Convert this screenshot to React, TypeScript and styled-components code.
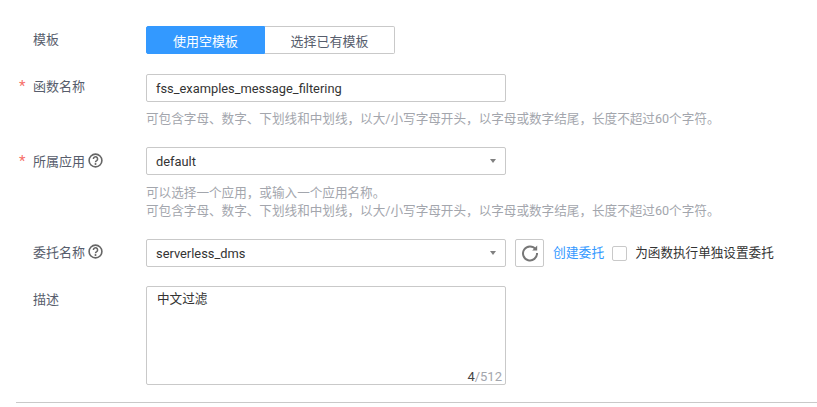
import React from 'react';
import styled, { createGlobalStyle } from 'styled-components';

const GlobalStyle = createGlobalStyle`
  html, body {
    margin: 0;
    background: #fff;
  }
  body {
    font-family: Roboto, "Noto Sans CJK SC", sans-serif;
    font-size: 13px;
    color: #252b3a;
  }
`;

const Page = styled.div`
  width: 817px;
  height: 407px;
  overflow: hidden;
  box-sizing: border-box;
  padding: 26px 0 0 16px;
`;

const Row = styled.div<{ $gap: number }>`
  display: grid;
  grid-template-columns: 130px 1fr;
  margin-bottom: ${({ $gap }) => $gap}px;
`;

const Label = styled.div<{ $height: number }>`
  display: flex;
  align-items: center;
  height: ${({ $height }) => $height}px;
  color: #575d6c;
  font-size: 13px;
`;

const Star = styled.span`
  width: 17px;
  flex: none;
  padding-left: 3px;
  box-sizing: border-box;
  color: #f66f6a;
  font-size: 15px;
  line-height: 26px;
  padding-top: 2px;
`;

const HelpIcon = styled.svg`
  margin-left: 3px;
  width: 15px;
  height: 15px;
  color: #666;
`;

const Segments = styled.div`
  display: flex;
  width: 249px;
  height: 28px;
`;

const Segment = styled.div<{ $active?: boolean }>`
  display: flex;
  align-items: center;
  justify-content: center;
  box-sizing: border-box;
  width: ${({ $active }) => ($active ? 119 : 130)}px;
  border: 1px solid ${({ $active }) => ($active ? '#3399ff' : '#c9c9c9')};
  border-left-width: ${({ $active }) => ($active ? 1 : 0)}px;
  border-radius: ${({ $active }) => ($active ? '2px 0 0 2px' : '0 2px 2px 0')};
  background: ${({ $active }) => ($active ? '#3399ff' : '#fff')};
  color: ${({ $active }) => ($active ? '#fff' : '#575d6c')};
`;

const Field = styled.div`
  display: flex;
  align-items: center;
  justify-content: space-between;
  box-sizing: border-box;
  width: 360px;
  height: 28px;
  padding: 0 9px;
  border: 1px solid #c9c9c9;
  border-radius: 2px;
  background: #fff;
  color: #333;
  font-size: 12.85px;
`;

const Caret = styled.span`
  width: 0;
  height: 0;
  border-left: 3.5px solid transparent;
  border-right: 3.5px solid transparent;
  border-top: 4px solid #808080;
`;

const Hint = styled.div<{ $top: number }>`
  margin-top: ${({ $top }) => $top}px;
  color: #a3a6ad;
  font-size: 12.6px;
  line-height: 18px;
`;

const Inline = styled.div`
  display: flex;
  align-items: flex-start;
`;

const RefreshButton = styled.div`
  display: flex;
  align-items: center;
  justify-content: center;
  box-sizing: border-box;
  width: 29px;
  height: 28px;
  margin-left: 9px;
  border: 1px solid #c9c9c9;
  border-radius: 2px;
`;

const Link = styled.a`
  margin-left: 9px;
  color: #3399ff;
  font-size: 12.8px;
  line-height: 28px;
`;

const Checkbox = styled.span`
  box-sizing: border-box;
  width: 15px;
  height: 15px;
  margin: 7px 0 0 8px;
  border: 1px solid #c9c9c9;
  border-radius: 2px;
`;

const CheckLabel = styled.span`
  margin-left: 8px;
  color: #333;
  font-size: 12.6px;
  line-height: 28px;
`;

const TextArea = styled.div`
  position: relative;
  box-sizing: border-box;
  width: 360px;
  height: 99px;
  padding: 2px 10px;
  border: 1px solid #c9c9c9;
  border-radius: 2px;
  color: #333;
  font-size: 12.6px;
  line-height: 20px;
`;

const Counter = styled.span`
  position: absolute;
  right: 3px;
  bottom: 0;
  color: #a3a6ad;
  font-size: 13px;
  line-height: 14px;
`;

const Count = styled.span`
  color: #444;
`;

const Divider = styled.div`
  margin-top: 17px;
  height: 1px;
  background: #c9c9c9;
`;

const Help = () => (
  <HelpIcon viewBox="0 0 15 15" fill="none">
    <circle cx="7.5" cy="7.5" r="6.4" stroke="currentColor" strokeWidth="1.6" />
    <path d="M5.4 5.9a2.1 2.1 0 1 1 3.3 1.7c-.8.5-1.2.9-1.2 1.7" stroke="currentColor" strokeWidth="1.5" />
    <circle cx="7.5" cy="11" r="1" fill="currentColor" />
  </HelpIcon>
);

const rule = '可包含字母、数字、下划线和中划线，以大/小写字母开头，以字母或数字结尾，长度不超过60个字符。';

export default function App() {
  return (
    <Page>
      <GlobalStyle />
      <Row $gap={20}>
        <Label $height={24}><Star /><span>模板</span></Label>
        <Segments>
          <Segment $active>使用空模板</Segment>
          <Segment>选择已有模板</Segment>
        </Segments>
      </Row>
      <Row $gap={19}>
        <Label $height={22}><Star>*</Star><span>函数名称</span></Label>
        <div>
          <Field>fss_examples_message_filtering</Field>
          <Hint $top={8}>{rule}</Hint>
        </div>
      </Row>
      <Row $gap={19}>
        <Label $height={26}><Star>*</Star><span>所属应用</span><Help /></Label>
        <div>
          <Field>default<Caret /></Field>
          <Hint $top={9}>可以选择一个应用，或输入一个应用名称。<br />{rule}</Hint>
        </div>
      </Row>
      <Row $gap={19}>
        <Label $height={24}><Star /><span>委托名称</span><Help /></Label>
        <Inline>
          <Field>serverless_dms<Caret /></Field>
          <RefreshButton>
            <svg width="18" height="18" viewBox="0 0 18 18" fill="none">
              <path d="M14.6 5.2A7 7 0 1 0 16 9" stroke="#777" strokeWidth="2" />
              <path d="M16.2 1.6v5h-5z" fill="#777" />
            </svg>
          </RefreshButton>
          <Link>创建委托</Link>
          <Checkbox />
          <CheckLabel>为函数执行单独设置委托</CheckLabel>
        </Inline>
      </Row>
      <Row $gap={0}>
        <Label $height={24}><Star /><span>描述</span></Label>
        <TextArea>
          中文过滤
          <Counter><Count>4</Count>/512</Counter>
        </TextArea>
      </Row>
      <Divider />
    </Page>
  );
}
